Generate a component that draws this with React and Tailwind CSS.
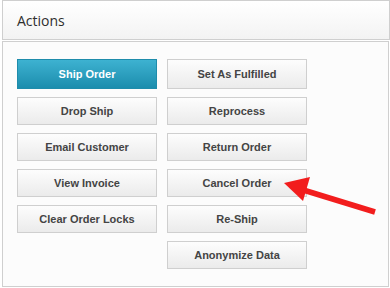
const leftActions = ["Ship Order", "Drop Ship", "Email Customer", "View Invoice", "Clear Order Locks"];
const rightActions = [
  "Set As Fulfilled",
  "Reprocess",
  "Return Order",
  "Cancel Order",
  "Re-Ship",
  "Anonymize Data",
];

const ActionButton = ({ label, primary, first }) => (
  <button
    className={`w-[140px] ${first ? "h-[30px]" : "h-[28px]"} border text-[11px] font-bold font-['Liberation_Sans',Arial,sans-serif] ${
      primary
        ? "border-[#1e8cab] bg-gradient-to-b from-[#3db2d1] to-[#1a8dad] text-white"
        : "border-[#cfcfcf] bg-gradient-to-b from-[#fdfdfd] to-[#ebebeb] text-[#444]"
    }`}
  >
    {label}
  </button>
);

const App = () => {
  return (
    <div className="relative w-[390px] h-[288px] bg-white pl-[2px]">
      {/* Header */}
      <div className="h-[40px] border border-[#cfcfcf] bg-gradient-to-b from-white to-[#f3f3f3] flex items-center pl-[14px]">
        <h2 className="text-[14px] text-[#2e2e2e] font-['Open_Sans',sans-serif]">Actions</h2>
      </div>

      {/* Body */}
      <div className="mt-[1px] mr-[1px] h-[246px] border border-[#cfcfcf] bg-[#fcfcfc] pt-[17px] pl-[14px]">
        <div className="flex gap-[10px]">
          <div className="flex flex-col gap-[8px]">
            {leftActions.map((a, i) => (
              <ActionButton key={a} label={a} primary={i === 0} first={i === 0} />
            ))}
          </div>
          <div className="flex flex-col gap-[8px]">
            {rightActions.map((a, i) => (
              <ActionButton key={a} label={a} first={i === 0} />
            ))}
          </div>
        </div>
      </div>

      {/* Red arrow pointing to Cancel Order */}
      <svg className="absolute left-0 top-0" width="390" height="288" viewBox="0 0 390 288">
        <line x1="375" y1="212" x2="300" y2="189" stroke="#f21d1d" strokeWidth="5.5" />
        <polygon points="284,183 310,177 303,201" fill="#f21d1d" />
      </svg>
    </div>
  );
};

export default App;
